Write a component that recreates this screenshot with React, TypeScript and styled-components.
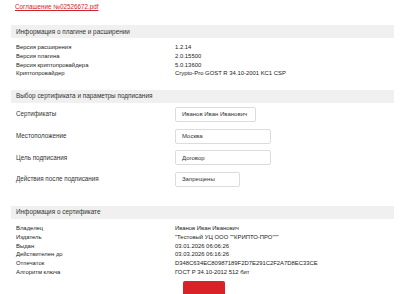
import React from "react";
import styled, { createGlobalStyle } from "styled-components";

const GlobalStyle = createGlobalStyle`
  html, body {
    margin: 0;
    padding: 0;
    background: #ffffff;
  }
  body {
    font-family: "Liberation Sans", Arial, sans-serif;
    color: #333333;
    overflow: hidden;
  }
`;

const Page = styled.div`
  width: 403px;
  padding: 3px 9px 0 11px;
  box-sizing: border-box;
  font-size: 6px;
  line-height: 8px;
`;

const LinkRow = styled.div`
  padding-left: 4px;
  height: 8px;
`;

const FileLink = styled.a`
  font-size: 6.3px;
  line-height: 8px;
  color: #d0242b;
  text-decoration: underline;
  cursor: pointer;
`;

const Panel = styled.section<{ $top: number }>`
  margin-top: ${(p) => p.$top}px;
`;

const PanelHeader = styled.div`
  height: 13px;
  background: #f0f0f0;
  padding-left: 5px;
  display: flex;
  align-items: center;
  font-size: 6.4px;
  color: #333333;
`;

const InfoList = styled.div`
  padding: 4.5px 0 0 5px;
  display: grid;
  grid-template-columns: 159px 1fr;
  grid-auto-rows: 8.85px;
  align-items: center;
  font-size: 5.9px;
  color: #222222;
`;

const InfoCell = styled.div`
  white-space: nowrap;
`;

const Form = styled.div`
  padding: 4px 0 0 5px;
  display: flex;
  flex-direction: column;
  gap: 6.7px;
`;

const FormRow = styled.div`
  display: grid;
  grid-template-columns: 159px 1fr;
  align-items: center;
  height: 15px;
`;

const FormLabel = styled.div`
  font-size: 6.3px;
  color: #333333;
`;

const Field = styled.div<{ $width: number }>`
  width: ${(p) => p.$width}px;
  height: 15px;
  box-sizing: border-box;
  border: 1px solid #dcdcdc;
  border-radius: 2px;
  padding-left: 6px;
  display: flex;
  align-items: center;
  font-size: 6px;
  color: #333333;
  background: #ffffff;
`;

const Footer = styled.div`
  margin-top: 4px;
  display: flex;
  justify-content: center;
`;

const SignButton = styled.button`
  width: 42px;
  height: 30px;
  margin-left: 2px;
  border: none;
  border-radius: 2px;
  background: #d92228;
  padding: 0;
`;

const plugin = [
  ["Версия расширения", "1.2.14"],
  ["Версия плагина", "2.0.15500"],
  ["Версия криптопровайдера", "5.0.13600"],
  ["Криптопровайдер", "Crypto-Pro GOST R 34.10-2001 KC1 CSP"],
];

const fields = [
  { label: "Сертификаты", value: "Иванов Иван Иванович", width: 81 },
  { label: "Местоположение", value: "Москва", width: 96 },
  { label: "Цель подписания", value: "Договор", width: 96 },
  { label: "Действия после подписания", value: "Запрещены", width: 65 },
];

const cert = [
  ["Владелец", "Иванов Иван Иванович"],
  ["Издатель", "\"Тестовый УЦ ООО \"\"КРИПТО-ПРО\"\"\""],
  ["Выдан", "03.01.2026 06:06:26"],
  ["Действителен до", "03.03.2026 06:16:26"],
  ["Отпечаток", "D348C634EC80987189F2D7E291C2F2A7D8EC33CE"],
  ["Алгоритм ключа", "ГОСТ Р 34.10-2012 512 бит"],
];

export default function App() {
  return (
    <>
      <GlobalStyle />
      <Page>
        <LinkRow>
          <FileLink>Соглашение №02526672.pdf</FileLink>
        </LinkRow>

        <Panel $top={14}>
          <PanelHeader>Информация о плагине и расширении</PanelHeader>
          <InfoList>
            {plugin.map(([k, v]) => (
              <React.Fragment key={k}>
                <InfoCell>{k}</InfoCell>
                <InfoCell>{v}</InfoCell>
              </React.Fragment>
            ))}
          </InfoList>
        </Panel>

        <Panel $top={12}>
          <PanelHeader>Выбор сертификата и параметры подписания</PanelHeader>
          <Form>
            {fields.map((f) => (
              <FormRow key={f.label}>
                <FormLabel>{f.label}</FormLabel>
                <Field $width={f.width}>{f.value}</Field>
              </FormRow>
            ))}
          </Form>
        </Panel>

        <Panel $top={19}>
          <PanelHeader>Информация о сертификате</PanelHeader>
          <InfoList>
            {cert.map(([k, v]) => (
              <React.Fragment key={k}>
                <InfoCell>{k}</InfoCell>
                <InfoCell>{v}</InfoCell>
              </React.Fragment>
            ))}
          </InfoList>
        </Panel>

        <Footer>
          <SignButton aria-label="Подписать" />
        </Footer>
      </Page>
    </>
  );
}
